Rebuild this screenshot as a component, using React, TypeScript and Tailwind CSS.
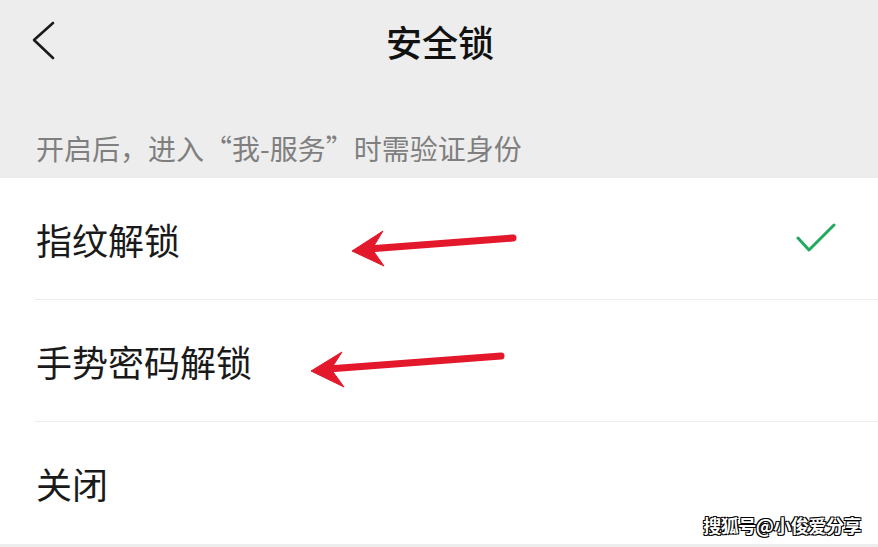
import React from 'react';

const font = { fontFamily: '"Noto Sans CJK SC", "Noto Sans", sans-serif' };

interface OptionRowProps {
    label: string;
    checked?: boolean;
    last?: boolean;
}

const OptionRow: React.FC<OptionRowProps> = ({ label, checked, last }) => {
    return (
        <div className="pl-[35px] bg-white">
            <div className={`h-[122px] flex items-center justify-between pr-[40px] ${last ? '' : 'border-b border-[#ececec]'}`}>
                <span className="text-[36px] leading-[40px] text-[#1a1a1a] pl-[1px]">{label}</span>
                {checked && (
                    <svg width="44" height="32" viewBox="0 0 44 32">
                        <polyline points="4,15 15,27 40,2" fill="none" stroke="#1faa5e" strokeWidth="3" strokeLinecap="round" strokeLinejoin="round" />
                    </svg>
                )}
            </div>
        </div>
    );
};

const App: React.FC = () => {
    const options = [
        { label: '指纹解锁', checked: true },
        { label: '手势密码解锁' },
        { label: '关闭' },
    ];

    return (
        <div className="relative w-[878px] h-[547px] bg-[#ededed] overflow-hidden" style={font}>
            {/* header */}
            <div className="relative h-[82px] flex items-center justify-center">
                <svg width="30" height="40" viewBox="0 0 30 40" className="absolute left-[28px] top-[21px]">
                    <polyline points="25,2 6,19 25,37" fill="none" stroke="#1a1a1a" strokeWidth="2.6" strokeLinecap="round" strokeLinejoin="round" />
                </svg>
                <h1 className="text-[36px] leading-[40px] font-medium text-[#111] ml-[2px]">安全锁</h1>
            </div>

            {/* tip */}
            <div className="h-[96px] flex items-end pl-[36px] pb-[10px]">
                <p className="text-[28px] leading-[40px] text-[#7f7f7f]">开启后，进入“我-服务”时需验证身份</p>
            </div>

            {/* options */}
            <div className="bg-white">
                {options.map((o, i) => (
                    <OptionRow key={i} label={o.label} checked={o.checked} last={i === options.length - 1} />
                ))}
            </div>

            {/* red annotation arrows */}
            <svg className="absolute inset-0 pointer-events-none" width="878" height="547" viewBox="0 0 878 547">
                <g fill="#e3192b" stroke="#e3192b">
                    <line x1="513" y1="238" x2="368" y2="249" strokeWidth="7" strokeLinecap="round" />
                    <polygon points="352,251 383,231 372,249 384,266" strokeWidth="1" strokeLinejoin="round" />
                    <line x1="501" y1="356" x2="328" y2="369" strokeWidth="7" strokeLinecap="round" />
                    <polygon points="311,371 342,352 331,369 344,387" strokeWidth="1" strokeLinejoin="round" />
                </g>
            </svg>

            {/* watermark */}
            <div
                className="absolute right-[17px] bottom-[10px] text-[18px] leading-[24px] font-bold text-white tracking-[-0.5px]"
                style={{ textShadow: '1px 1px 0 #000, -1px -1px 0 #000, 1px -1px 0 #000, -1px 1px 0 #000' }}
            >
                搜狐号@小俊爱分享
            </div>
        </div>
    );
};

export default App;
